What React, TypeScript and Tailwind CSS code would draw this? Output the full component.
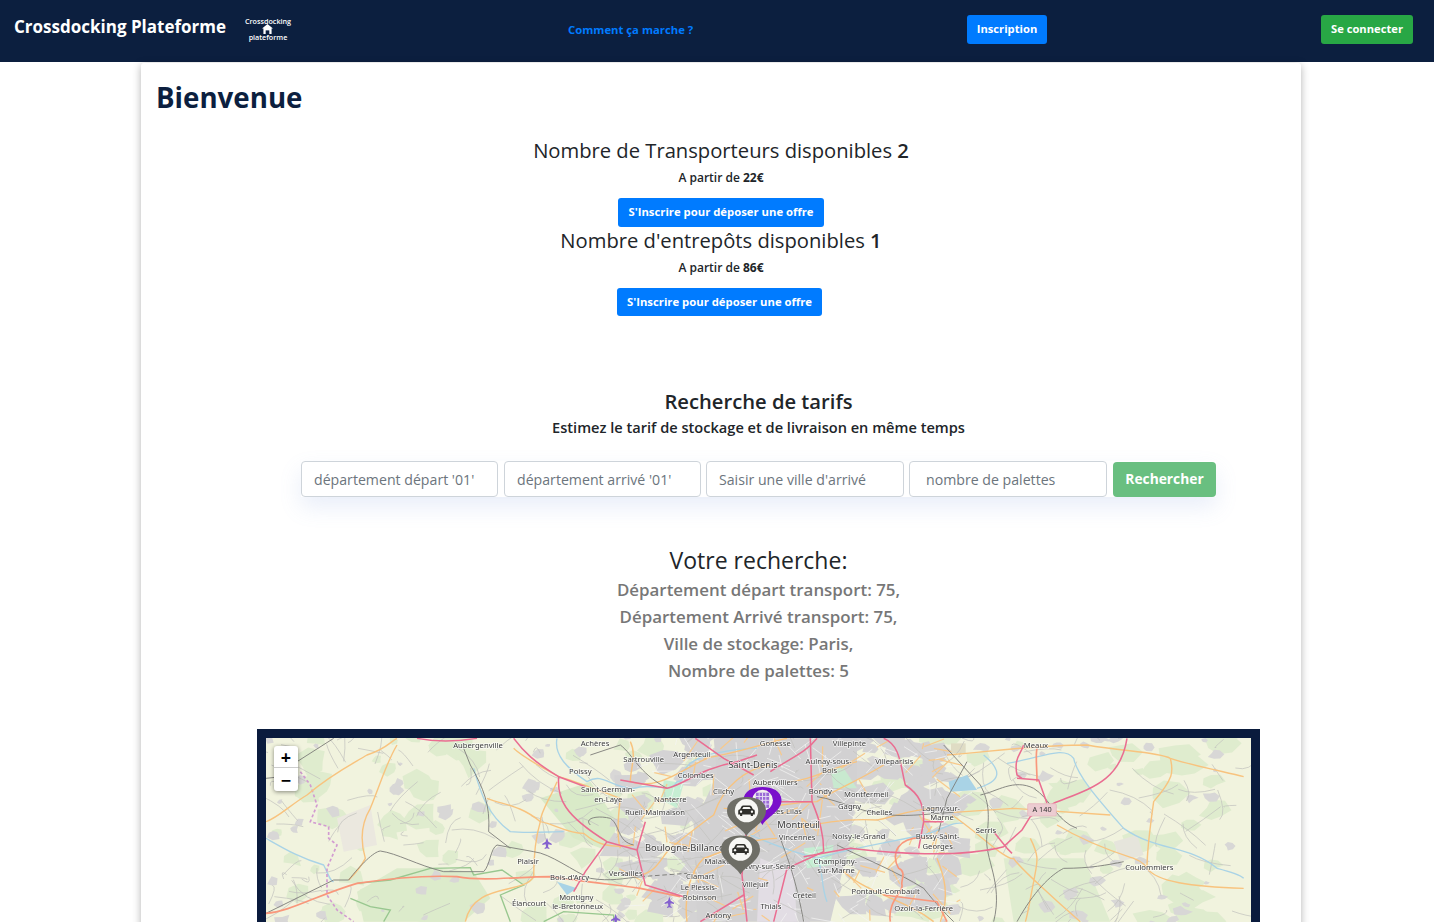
import React from 'react';

const font = { fontFamily: '"Open Sans", "Noto Sans", sans-serif' };

// small seeded random so the map's drawing stays the same on each load
const rand = (seed: number) => {
  const x = Math.sin(seed * 127.1) * 43758.5453;
  return x - Math.floor(x);
};

// irregular blob as a path, for woods and built up patches
const blob = (seed: number, cx: number, cy: number, r: number) => {
  const pts = Array.from({ length: 7 }, (_, i) => {
    const a = (i / 7) * Math.PI * 2;
    const k = 0.55 + rand(seed + i * 13) * 0.8;
    return `${(cx + Math.cos(a) * r * k * 1.4).toFixed(1)} ${(cy + Math.sin(a) * r * k).toFixed(1)}`;
  });
  return `M${pts.join(' L')}Z`;
};

const minorRoads = Array.from({ length: 300 }, (_, i) => {
  const x = rand(i + 1) * 2960;
  const y = 30 + rand(i + 200) * 570;
  const dx = (rand(i + 400) - 0.5) * 260;
  const dy = (rand(i + 600) - 0.5) * 190;
  const mx = x + dx * 0.5 + (rand(i + 800) - 0.5) * 60;
  const my = y + dy * 0.5 + (rand(i + 900) - 0.5) * 60;
  return `M${x.toFixed(0)} ${y.toFixed(0)} Q${mx.toFixed(0)} ${my.toFixed(0)} ${(x + dx).toFixed(0)} ${(y + dy).toFixed(0)}`;
});

const cityRoads = Array.from({ length: 260 }, (_, i) => {
  const x = 1120 + rand(i + 1000) * 980;
  const y = 30 + rand(i + 1200) * 570;
  const dx = (rand(i + 1400) - 0.5) * 150;
  const dy = (rand(i + 1600) - 0.5) * 130;
  return { d: `M${x.toFixed(0)} ${y.toFixed(0)} L${(x + dx).toFixed(0)} ${(y + dy).toFixed(0)}`, main: i % 3 === 0 };
});

const villages = Array.from({ length: 150 }, (_, i) =>
  blob(i + 2000, rand(i + 2000) * 2960, 30 + rand(i + 2200) * 570, 5 + rand(i + 2400) * 13),
);

const suburbs = Array.from({ length: 220 }, (_, i) => {
  const a = rand(i + 5000) * Math.PI * 2;
  const d = Math.sqrt(rand(i + 5200));
  return blob(i + 5000, 1600 + Math.cos(a) * d * 540, 290 + Math.sin(a) * d * 400, 14 + rand(i + 5400) * 24);
});

const greens = Array.from({ length: 170 }, (_, i) =>
  blob(i + 3000, rand(i + 3000) * 2960, 30 + rand(i + 3200) * 570, 10 + rand(i + 3400) * 30),
);

type Label = [string, number, number, number?];

// x/y in 3x map units, the svg scales them down
const labels: Label[] = [
  ['Aubergenville', 663, 68], ['Achères', 1014, 64], ['Sartrouville', 1160, 112], ['Argenteuil', 1305, 96],
  ['Poissy', 970, 146], ['Colombes', 1316, 158], ['Saint-Germain-', 1053, 202], ['en-Laye', 1054, 232],
  ['Nanterre', 1240, 232], ['Rueil-Malmaison', 1194, 269], ['Clichy', 1400, 208], ['Plaisir', 813, 418],
  ['Bois-d\'Arcy', 938, 464], ['Versailles', 1106, 452], ['Clamart', 1330, 462], ['Le Plessis-', 1326, 496],
  ['Robinson', 1328, 524], ['Élancourt', 816, 544], ['Montigny', 958, 525], ['le-Bretonneux', 962, 553],
  ['Antony', 1384, 578], ['Malakoff', 1390, 418], ['Saint-Denis', 1488, 128, 28], ['Boulogne-Billancourt', 1303, 377, 28],
  ['Aubervilliers', 1555, 179], ['Gonesse', 1555, 62], ['Villepinte', 1777, 62], ['Aulnay-sous-', 1715, 116],
  ['Bois', 1718, 144], ['Villeparisis', 1912, 117], ['Bondy', 1690, 207], ['Montfermeil', 1828, 216],
  ['Gagny', 1778, 252], ['Chelles', 1867, 269], ['Les Lilas', 1590, 266], ['Montreuil', 1625, 309, 28],
  ['Vincennes', 1620, 345], ['Noisy-le-Grand', 1805, 341], ['Lagny-sur-', 2052, 257], ['Marne', 2055, 285],
  ['Bussy-Saint-', 2042, 343], ['Georges', 2042, 372], ['Serris', 2187, 323], ['Meaux', 2337, 68],
  ['Coulommiers', 2677, 434], ['Champigny-', 1735, 416], ['sur-Marne', 1737, 444], ['Pontault-Combault', 1886, 507],
  ['Ozoir-la-Ferrière', 2000, 558], ['Créteil', 1642, 520], ['Thiais', 1542, 551], ['Ivry-sur-Seine', 1540, 433],
  ['Villejuif', 1495, 485],
];

const planes = [[870, 338], [1237, 515], [1076, 566]];

const MapDrawing = () => (
  <svg viewBox="0 0 2955 1176" className="block w-[985px] h-[392px] blur-[0.45px]">
    <rect width="2955" height="1176" fill="#f1f3de" />
    <g transform="translate(-27,-39)">
      {greens.map((d, i) => (
        <path key={i} d={d} fill="#dfecce" />
      ))}
      <path d="M420 430 L520 430 L650 440 L700 520 L620 590 L320 590 L300 500Z" fill="#dcebcb" />
      <path d="M850 220 L1000 170 L1080 290 L1060 380 L950 340Z" fill="#d9eac8" />
      <path d="M2240 400 L2480 400 L2560 590 L2270 590Z" fill="#dfeccf" />
      <path d="M240 280 L340 240 L360 360 L260 380Z" fill="#ebe8df" />
      <path d="M2570 350 L2640 330 L2660 390 L2590 410Z" fill="#e6e5dc" />
      {villages.map((d, i) => (
        <path key={i} d={d} fill="#d8d7d6" />
      ))}
      {suburbs.map((d, i) => (
        <path key={i} d={d} fill="#d4d3d4" />
      ))}
      {/* paris and the inner ring */}
      <path d="M1370 40 L1800 40 L1800 170 L1780 340 L1720 590 L1320 590 L1310 300 L1380 150Z" fill="#d2d1d2" />
      <path d="M1510 400 L1610 440 L1620 590 L1500 590Z" fill="#e2dde4" />
      <path d="M1220 165 L1280 175 L1260 250 L1215 225Z" fill="#c6eed3" />
      <path d="M1720 130 L1760 130 L1800 190 L1730 190Z" fill="#c8e9cf" />
      <path d="M1640 370 L1730 360 L1720 420 L1650 430Z" fill="#c6eed3" />
      <path d="M2082 55 L2126 55 L2126 85 L2082 85Z" fill="#dfdcc4" />
      {minorRoads.map((d, i) => (
        <path key={i} d={d} fill="none" stroke="#c2c2be" strokeWidth="2.2" />
      ))}
      {cityRoads.map((r, i) => (
        <path key={i} d={r.d} fill="none" stroke={r.main ? '#f7c98c' : '#f4f4f2'} strokeWidth={r.main ? 3.6 : 2.2} />
      ))}

      {/* water */}
      <g fill="none" stroke="#a9d3e6" strokeWidth="4">
        <path d="M900 40 C890 90 930 130 990 170 C1040 140 1060 190 1130 190 C1190 170 1240 210 1260 170 C1300 170 1240 130 1350 90 C1400 80 1430 70 1500 70" />
        <path d="M27 340 C80 370 130 400 200 420 C215 450 220 470 230 470" />
        <path d="M650 130 C670 200 690 270 760 320 C810 325 880 320 920 320" />
        <path d="M1480 330 C1550 360 1620 385 1680 400 C1700 430 1690 480 1710 530" />
        <path d="M1680 400 C1780 370 1850 360 2000 330 C2070 310 2080 290 2120 295" />
        <path d="M2250 115 C2350 100 2420 60 2450 100 C2460 150 2520 220 2600 310 C2700 380 2800 360 2880 430 C2920 440 2950 450 2960 460" />
        <path d="M2180 90 C2240 140 2230 170 2160 190" />
      </g>
      <path d="M2075 170 L2130 150 L2160 195 L2080 200Z" fill="#a9d3e6" />
      <path d="M900 470 L960 490 L930 510Z" fill="#a9d3e6" />

      {/* green borders and the purple dashed one */}
      <path d="M280 520 L340 545 L400 555 L380 590 M300 475 L400 465 L520 430 L640 428 L650 450 L735 435 L800 480 L730 510 L760 590 M860 590 L920 560 L1070 570 L1070 590" fill="none" stroke="#98c78f" strokeWidth="4" />
      <path d="M130 140 L160 180 L180 240 L160 290 L215 305 L215 340 L240 360 L210 430 L210 510 L240 555 L290 590" fill="none" stroke="#d29bd1" strokeWidth="5" strokeDasharray="9 7" />

      {/* orange roads */}
      <g fill="none" stroke="#f8c37e" strokeWidth="4.2">
        <path d="M27 290 C60 280 100 240 150 210 C220 150 280 120 330 90 C390 70 400 50 420 40" />
        <path d="M420 60 C390 110 380 150 340 250 C310 300 310 350 325 400 C310 430 290 450 275 465" />
        <path d="M690 220 C740 240 790 240 850 290 C900 300 930 325 980 325 C1020 360 1060 370 1130 360" />
        <path d="M850 290 C850 260 880 220 900 170 M850 290 C835 340 830 410 830 455 C800 510 650 470 625 590" />
        <path d="M770 70 C800 100 880 140 905 155 C960 170 1060 210 1090 220 C1080 300 1080 340 1090 370" />
        <path d="M1150 450 C1200 440 1210 400 1240 370 C1290 330 1340 290 1370 270 C1400 180 1470 130 1540 120" />
        <path d="M1290 590 C1280 510 1300 440 1340 400 C1400 380 1480 340 1560 340" />
        <path d="M1400 250 C1500 260 1600 230 1680 230 C1720 200 1800 170 1880 120" />
        <path d="M1590 170 C1650 170 1720 130 1800 110 M1620 310 C1700 290 1780 280 1860 285 C1900 280 1960 250 2040 250" />
        <path d="M1120 50 C1140 90 1120 130 1120 170 C1200 200 1280 130 1350 100" />
        <path d="M1340 100 C1420 90 1540 50 1590 40" />
        <path d="M2090 262 L2270 250 L2560 270 M2070 90 C2200 80 2330 60 2490 60 C2600 80 2700 80 2740 100 C2800 120 2900 140 2960 155" />
        <path d="M2740 100 C2750 140 2750 160 2690 230 C2680 300 2670 390 2670 430 C2700 470 2800 485 2960 490" />
        <path d="M2400 300 C2500 360 2600 390 2630 400 C2660 410 2670 430 2670 430" />
        <path d="M2085 270 C2160 320 2250 410 2270 400 C2280 420 2400 530 2470 590 M2320 340 C2350 400 2340 410 2330 470 C2320 520 2310 580 2305 590" />
        <path d="M2040 400 C2060 450 2080 510 2050 590" />
        <path d="M1760 440 C1840 510 1940 520 2030 590" />
      </g>

      {/* rail */}
      <g fill="none" stroke="#80807c" strokeWidth="2.8">
        <path d="M27 565 L230 465 L275 465 C310 420 350 380 370 378 C420 385 480 420 560 440 L680 440 C700 420 700 370 720 360 L830 380 C880 385 950 440 1000 460 C1060 470 1100 460 1150 455" />
        <path d="M620 70 L640 120 C680 190 700 240 695 320 L760 370" />
        <path d="M120 110 L230 40 M27 160 L120 150 M1000 90 L1090 60 C1130 90 1140 140 1230 190" />
        <path d="M1000 300 C980 280 1020 270 1060 280 C1090 300 1080 350 1130 360" />
        <path d="M1680 215 C1750 225 1830 270 1900 270 C1960 275 2030 265 2090 262 M2130 110 L2070 220 L2045 320" />
        <path d="M2060 60 L2170 180 C2190 220 2200 250 2190 330 C2180 400 2240 470 2210 590" />
        <path d="M2170 210 C2220 200 2270 160 2330 190 C2380 220 2400 290 2460 310" />
        <path d="M1740 360 C1820 400 1920 440 2000 490 C2040 540 2060 560 2090 590" />
        <path d="M1570 340 C1600 420 1620 480 1640 590" />
        <path d="M2280 590 C2330 500 2380 450 2420 430 C2500 430 2550 420 2600 410" />
      </g>
      <path d="M1150 455 L1290 445" fill="none" stroke="#80807c" strokeWidth="3" strokeDasharray="14 8" />

      {/* salmon trunk road */}
      <path d="M27 565 C100 560 180 510 300 475 C400 460 500 450 600 455 C680 470 780 455 880 455 C980 470 1080 480 1150 490 L1270 515 M1935 480 C1940 500 1890 530 1900 590 M1880 510 L2040 530 L2070 590 M2010 340 C1920 330 1900 390 1925 430 C1950 440 1930 470 1935 480" fill="none" stroke="#f9977b" strokeWidth="5" />
      <path d="M2340 70 C2335 90 2340 130 2340 170" fill="none" stroke="#f9977b" strokeWidth="5" />

      {/* motorways */}
      <g fill="none" stroke="#ea6d91" strokeWidth="4.6">
        <path d="M480 40 C530 50 600 50 660 40" />
        <path d="M770 40 C800 80 830 110 905 155 C900 220 920 270 1050 350 L1140 375 L1165 480 L1280 515" />
        <path d="M905 155 L985 185 M1090 165 L1230 190 C1280 180 1330 130 1440 110 L1500 90" />
        <path d="M1050 350 L985 440 L950 500 M1165 290 L1140 375" />
        <path d="M1315 40 L1400 100 L1490 150 M1540 140 C1600 100 1650 80 1680 40" />
        <path d="M1660 40 L1665 230 C1690 290 1700 330 1700 380 L1590 430 L1550 590" />
        <path d="M1665 230 L1520 230 L1470 300 L1455 450 L1470 590 M1460 510 L1330 590" />
        <path d="M1640 395 L1780 370 C1900 385 2100 400 2240 365 L2295 315 L2320 275 L2390 235 C2500 190 2590 170 2610 40" />
        <path d="M1880 40 C1930 60 1930 120 1945 180 C1990 210 2000 240 2000 290 L1985 370 M2000 290 L2060 290" />
        <path d="M2295 160 L2280 150 C2270 100 2290 90 2300 60 M2280 160 L2345 165 L2370 235" />
        <path d="M2210 320 L2250 370 L2265 385" />
      </g>

      {labels.map(([t, x, y, size], i) => (
        <text
          key={i}
          x={x}
          y={y}
          textAnchor="middle"
          fontSize={size ?? 23}
          fontFamily='"Noto Sans", sans-serif'
          fill="#3b3b3b"
          stroke="#ffffff"
          strokeOpacity="0.75"
          strokeWidth="4"
          paintOrder="stroke"
        >
          {t}
        </text>
      ))}

      <rect x="2312" y="236" width="86" height="37" rx="4" fill="#ecccd1" stroke="#e5b0bb" strokeWidth="2" />
      <text x="2355" y="262" textAnchor="middle" fontSize="22" fontFamily='"Noto Sans", sans-serif' fill="#333333">
        A 140
      </text>

      {/* airfields */}
      {planes.map(([x, y], i) => (
        <path
          key={i}
          transform={`translate(${x},${y})`}
          fill="#8461cf"
          d="M0 0 L4 12 L14 18 L14 22 L4 20 L3 28 L7 31 L7 34 L0 32 L-7 34 L-7 31 L-3 28 L-4 20 L-14 22 L-14 18 L-4 12Z"
        />
      ))}
    </g>
  </svg>
);

const pinShape = 'M20 40 C16 32 0 26 0 14 C0 4 10 0 20 0 C30 0 40 4 40 14 C40 26 24 32 20 40Z';

// grey car pin, same shape twice
const CarPin = ({ className }: { className: string }) => (
  <svg viewBox="0 0 40 40" className={className}>
    <path d={pinShape} fill="#6e6e66" />
    <circle cx="20" cy="14" r="12" fill="#f7f7f4" />
    <path d="M11.5 18 V14.5 C11.5 13.4 12.2 12.8 13.4 12.6 L15 9.6 C15.4 9 15.9 8.8 16.6 8.8 H23.4 C24.1 8.8 24.6 9 25 9.6 L26.6 12.6 C27.8 12.8 28.5 13.4 28.5 14.5 V18 H26.6 V19.6 H24.4 V18 H15.6 V19.6 H13.4 V18Z" fill="#2f2f2b" />
    <path d="M15.6 12.4 L16.8 10.2 H23.2 L24.4 12.4Z" fill="#f7f7f4" />
    <circle cx="14.4" cy="15" r="1.2" fill="#f7f7f4" />
    <circle cx="25.6" cy="15" r="1.2" fill="#f7f7f4" />
  </svg>
);

const WarehousePin = ({ className }: { className: string }) => (
  <svg viewBox="0 0 40 40" className={className}>
    <path d={pinShape} fill="#7a0fcb" />
    <circle cx="20" cy="14" r="11" fill="#f3f0ee" />
    <rect x="13" y="6" width="14" height="16" fill="#9a6ad6" />
    <path d="M13 10 H27 M13 14 H27 M13 18 H27 M16.5 6 V22 M20 6 V22 M23.5 6 V22" stroke="#e6dcf3" strokeWidth="1" />
  </svg>
);

const LogoHouse = () => (
  <svg viewBox="0 0 12 11" className="w-[11px] h-[10px] absolute left-[18px] top-[7px]">
    <path d="M6 0 L12 5 L10.5 5 L10.5 11 L1.5 11 L1.5 5 L0 5Z" fill="#ffffff" />
    <path d="M4 7 H8 V11 H4Z" fill="#0c1f3f" />
  </svg>
);

const NavBar = () => (
  <nav className="h-[62px] bg-[#0c1f3f] flex items-center pl-[14px] pr-[21px]">
    <a className="w-[212px] whitespace-nowrap text-white text-[17px] font-bold leading-none mb-[10px]">Crossdocking Plateforme</a>
    <div className="relative ml-[18px] w-[48px] h-[24px] text-white text-[7.2px] font-semibold leading-[8px] text-center mb-[5px] whitespace-nowrap">
      <LogoHouse />
      <div className="absolute left-0 top-0 w-[48px]">Crossdocking</div>
      <div className="absolute left-0 top-[16px] w-[48px]">plateforme</div>
    </div>
    <a className="ml-[276px] w-[125px] whitespace-nowrap text-center text-[#007bff] text-[11.3px] font-bold mb-[2px]">Comment ça marche ?</a>
    <button className="ml-[274px] w-[80px] h-[29px] rounded-[3px] bg-[#007bff] text-white text-[11.2px] font-bold mb-[3px]">Inscription</button>
    <button className="ml-auto w-[92px] h-[29px] rounded-[3px] bg-[#28a745] text-white text-[11.2px] font-bold mb-[3px]">Se connecter</button>
  </nav>
);

const Offer = ({ title, count, price, btnClass }: { title: string; count: string; price: string; btnClass: string }) => (
  <div className="flex flex-col items-center">
    <h3 className="text-[20.2px] leading-[26px] text-[#212529]">
      {title} <strong className="font-semibold">{count}</strong>
    </h3>
    <p className="mt-[4px] h-[21px] text-[12px] leading-[21px] font-semibold text-[#212529]">
      A partir de <strong className="font-bold">{price}</strong>
    </p>
    <button className={`mt-[10px] whitespace-nowrap rounded-[3px] bg-[#007bff] text-white text-[11.3px] font-bold ${btnClass}`}>
      S'Inscrire pour déposer une offre
    </button>
  </div>
);

const inputClass =
  'h-[36px] min-w-0 rounded-[4px] border border-[#ced4da] bg-white text-[14.15px] text-[#495057] placeholder:text-[#6c757d] outline-none';

const SearchForm = () => (
  <div className="mt-[23px] w-[915px] flex items-center shadow-[0_10px_22px_rgba(120,150,220,0.16)]">
    <input className={`${inputClass} w-[197px] px-[12px]`} placeholder="département départ '01'" />
    <input className={`${inputClass} ml-[6px] w-[197px] px-[12px]`} placeholder="département arrivé '01'" />
    <input className={`${inputClass} ml-[5px] w-[198px] px-[12px]`} placeholder="Saisir une ville d'arrivé" />
    <input className={`${inputClass} ml-[5px] w-[198px] px-[16px]`} placeholder="nombre de palettes" />
    <button className="ml-[6px] w-[103px] h-[35px] rounded-[4px] bg-[#69bf80] text-white text-[13.8px] font-bold">Rechercher</button>
  </div>
);

export default function App() {
  return (
    <div className="h-[922px] overflow-hidden bg-white" style={font}>
      <NavBar />
      <main className="ml-[141px] mt-[1px] w-[1160px] h-[900px] rounded-t-[3px] bg-white shadow-[0_2px_8px_rgba(0,0,0,0.3)]">
        <h1 className="pl-[15px] pt-[14px] text-[27.7px] leading-[40px] font-bold text-[#0c1f3f]">Bienvenue</h1>

        <section className="mt-[20px] flex flex-col">
          <Offer title="Nombre de Transporteurs disponibles" count="2" price="22€" btnClass="w-[206px] h-[29px]" />
          <Offer title="Nombre d'entrepôts disponibles" count="1" price="86€" btnClass="w-[205px] h-[28px] mr-[3px]" />
        </section>

        <section className="ml-[116px] w-[1003px] flex flex-col items-center">
          <h2 className="mt-[70px] text-[20.2px] leading-[30px] font-semibold text-[#212529]">Recherche de tarifs</h2>
          <p className="text-[14.6px] leading-[22px] font-semibold text-[#212529]">
            Estimez le tarif de stockage et de livraison en même temps
          </p>
          <SearchForm />

          <h3 className="mt-[47px] text-[23px] leading-[32px] font-medium text-[#212529]">Votre recherche:</h3>
          <div className="text-[16.9px] leading-[27px] font-semibold text-[#777777] text-center">
            <p>Département départ transport: 75,</p>
            <p>Département Arrivé transport: 75,</p>
            <p>Ville de stockage: Paris,</p>
            <p>Nombre de palettes: 5</p>
          </div>

          <div className="relative mt-[45px] w-[1003px] border-[9px] border-[#0a1b3d] overflow-hidden">
            <MapDrawing />
            <div className="absolute left-[8px] top-[8px] w-[24px] rounded-[3px] bg-white shadow-[0_1px_4px_rgba(0,0,0,0.45)] text-black font-bold">
              <div className="h-[22px] border-b border-[#cccccc] flex items-center justify-center text-[18px] leading-none">+</div>
              <div className="h-[23px] flex items-center justify-center text-[18px] leading-none">−</div>
            </div>
            <WarehousePin className="absolute left-[477px] top-[49px] w-[39px] h-[38px]" />
            <CarPin className="absolute left-[461px] top-[59px] w-[39px] h-[39px]" />
            <CarPin className="absolute left-[455px] top-[97px] w-[39px] h-[40px]" />
          </div>
        </section>
      </main>
    </div>
  );
}
